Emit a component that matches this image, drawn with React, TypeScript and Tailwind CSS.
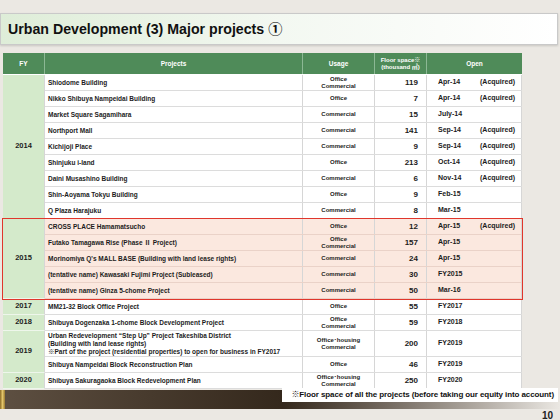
import React from "react";

type Row = {
  name: string[];
  usage: string[];
  area: string;
  open: string;
  acquired?: boolean;
  tall?: boolean;
};

type Group = { fy: string; hl?: boolean; rows: Row[] };

const OC = ["Office", "Commercial"];

const groups: Group[] = [
  {
    fy: "2014",
    rows: [
      { name: ["Shiodome Building"], usage: OC, area: "119", open: "Apr-14", acquired: true },
      { name: ["Nikko Shibuya Nampeidai Building"], usage: ["Office"], area: "7", open: "Apr-14", acquired: true },
      { name: ["Market Square Sagamihara"], usage: ["Commercial"], area: "15", open: "July-14" },
      { name: ["Northport Mall"], usage: ["Commercial"], area: "141", open: "Sep-14", acquired: true },
      { name: ["Kichijoji Place"], usage: ["Commercial"], area: "9", open: "Sep-14", acquired: true },
      { name: ["Shinjuku i-land"], usage: ["Office"], area: "213", open: "Oct-14", acquired: true },
      { name: ["Daini Musashino Building"], usage: ["Commercial"], area: "6", open: "Nov-14", acquired: true },
      { name: ["Shin-Aoyama Tokyu Building"], usage: ["Office"], area: "9", open: "Feb-15" },
      { name: ["Q Plaza Harajuku"], usage: ["Commercial"], area: "8", open: "Mar-15" },
    ],
  },
  {
    fy: "2015",
    hl: true,
    rows: [
      { name: ["CROSS PLACE Hamamatsucho"], usage: ["Office"], area: "12", open: "Apr-15", acquired: true },
      { name: ["Futako Tamagawa Rise (Phase Ⅱ Project)"], usage: OC, area: "157", open: "Apr-15" },
      { name: ["Morinomiya Q's MALL BASE (Building with land lease rights)"], usage: ["Commercial"], area: "24", open: "Apr-15" },
      { name: ["(tentative name) Kawasaki Fujimi Project (Subleased)"], usage: ["Commercial"], area: "30", open: "FY2015" },
      { name: ["(tentative name) Ginza 5-chome Project"], usage: ["Commercial"], area: "50", open: "Mar-16" },
    ],
  },
  {
    fy: "2017",
    rows: [{ name: ["MM21-32 Block Office Project"], usage: ["Office"], area: "55", open: "FY2017" }],
  },
  {
    fy: "2018",
    rows: [{ name: ["Shibuya Dogenzaka 1-chome Block Development Project"], usage: OC, area: "59", open: "FY2018" }],
  },
  {
    fy: "2019",
    rows: [
      {
        name: [
          "Urban Redevelopment \u201cStep Up\u201d Project Takeshiba District",
          "(Building with land lease rights)",
          "※Part of the project (residential properties) to open for business in FY2017",
        ],
        usage: ["Office･housing", "Commercial"],
        area: "200",
        open: "FY2019",
        tall: true,
      },
      { name: ["Shibuya Nampeidai Block Reconstruction Plan"], usage: ["Office"], area: "46", open: "FY2019" },
    ],
  },
  {
    fy: "2020",
    rows: [{ name: ["Shibuya Sakuragaoka Block Redevelopment Plan"], usage: ["Office･housing", "Commercial"], area: "250", open: "FY2020" }],
  },
];

const font = { fontFamily: '"Liberation Sans", Arial, "Noto Sans CJK JP", sans-serif' };

const TableRow = ({ r, hl }: { r: Row; hl?: boolean }) => (
  <div
    className={`flex box-border border-b ${r.tall ? "h-[26px]" : "h-[16px]"} ${
      hl ? "bg-[#fbe8df] border-[#ead2c8]" : "bg-white border-[#dcdcdc]"
    }`}
  >
    <div className="w-[258px] border-r border-[#d6d6d6] pl-[3px] flex flex-col justify-center text-[6.5px] leading-[8px] font-bold text-[#1c1c1c]">
      {r.name.map((n) => (
        <span key={n} className="whitespace-nowrap">{n}</span>
      ))}
    </div>
    <div className="w-[72px] border-r border-[#d6d6d6] flex flex-col items-center justify-center text-[6px] leading-[7px] font-bold text-[#1c1c1c]">
      {r.usage.map((u) => (
        <span key={u}>{u}</span>
      ))}
    </div>
    <div className="w-[52px] border-r border-[#d6d6d6] flex items-center justify-end pr-[8px] text-[8px] font-bold text-[#1c1c1c]">
      {r.area}
    </div>
    <div className="w-[95px] border-r border-[#d6d6d6] flex items-center text-[7px] font-bold text-[#1c1c1c]">
      <span className="w-[53px] pl-[11px]">{r.open}</span>
      {r.acquired && <span>(Acquired)</span>}
    </div>
  </div>
);

export default function App() {
  return (
    <div className="w-[560px] h-[420px] bg-[#ebe8e3] overflow-hidden" style={font}>
      <div className="pt-[13px]">
        <div className="w-[558px] h-[32px] box-border border border-[#c9c9c9] bg-gradient-to-r from-[#deedd8] via-[#f3f8f1] to-white shadow-[0_1px_2px_rgba(0,0,0,0.15)] flex items-center pl-[7px]">
          <h1 className="text-[14.2px] font-bold text-[#111] leading-none">Urban Development (3) Major projects ①</h1>
        </div>
      </div>

      <div className="ml-[3px] mt-[8px] w-[519px]">
        <div className="flex h-[22px] bg-[#4f8b59] text-white font-bold text-[6.5px] leading-[7px] border-b border-white box-border">
          <div className="w-[42px] border-r border-[#8cb894] flex items-center justify-center">FY</div>
          <div className="w-[258px] border-r border-[#8cb894] flex items-center justify-center">Projects</div>
          <div className="w-[72px] border-r border-[#8cb894] flex items-center justify-center">Usage</div>
          <div className="w-[52px] border-r border-[#8cb894] flex flex-col items-center justify-center text-[6px]">
            <span>Floor space※</span>
            <span>(thousand ㎡)</span>
          </div>
          <div className="w-[95px] flex items-center justify-center">Open</div>
        </div>

        {groups.map((g) => (
          <div key={g.fy} className={`flex ${g.hl ? "outline outline-1 outline-[#e0362c] relative" : ""}`}>
            <div className="w-[42px] box-border bg-[#d4eacb] border-r border-b border-r-[#d6d6d6] border-b-[#eef6eb] flex items-center justify-center pb-[2px] text-[7.5px] font-bold text-[#1c1c1c]">
              {g.fy}
            </div>
            <div className="flex flex-col">
              {g.rows.map((r) => (
                <TableRow key={r.name[0]} r={r} hl={g.hl} />
              ))}
            </div>
          </div>
        ))}
      </div>

      <div className="relative mt-[1px] h-[19px] flex">
        <div className="w-[5px] bg-gradient-to-r from-[#8a6a24] via-[#e3c56a] to-[#9a7a30]" />
        <div className="flex-1 bg-gradient-to-r from-[#5d4f41] via-[#34281c] to-[#ebe8e3]" />
        <div className="absolute right-[2px] top-[-2px] w-[276px] h-[14px] bg-white flex items-center justify-end pr-[4px]">
          <span className="text-[8px] font-bold text-[#111] whitespace-nowrap tracking-[-0.1px]">
            ※Floor space of all the projects (before taking our equity into account)
          </span>
        </div>
      </div>

      <div className="flex justify-end pr-[7px] pt-[2px]">
        <span className="text-[10px] font-bold text-[#222] leading-none">10</span>
      </div>
    </div>
  );
}
